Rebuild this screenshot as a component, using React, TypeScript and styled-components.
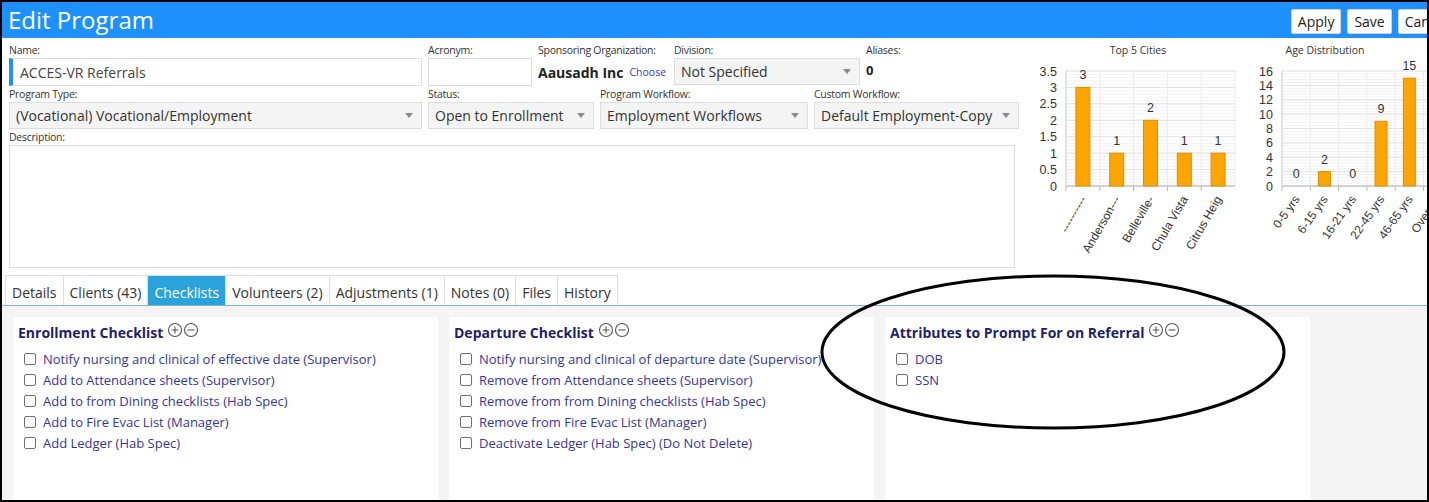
import React from 'react'
import styled, { createGlobalStyle } from 'styled-components'

const GlobalStyle = createGlobalStyle`
  html, body {
    margin: 0;
    padding: 0;
    background: #fff;
  }
  body {
    font-family: 'Open Sans', 'Noto Sans', sans-serif;
    color: #333;
  }
  * {
    box-sizing: border-box;
  }
`

interface Bar {
  label: string
  value: number
}

const cities: Bar[] = [
  { label: '----------', value: 3 },
  { label: 'Anderson---', value: 1 },
  { label: 'Belleville-', value: 2 },
  { label: 'Chula Vista', value: 1 },
  { label: 'Citrus Heig', value: 1 }
]

const ages: Bar[] = [
  { label: '0-5 yrs', value: 0 },
  { label: '6-15 yrs', value: 2 },
  { label: '16-21 yrs', value: 0 },
  { label: '22-45 yrs', value: 9 },
  { label: '46-65 yrs', value: 15 },
  { label: 'Over 65', value: 4 }
]

const enrollment = [
  'Notify nursing and clinical of effective date (Supervisor)',
  'Add to Attendance sheets (Supervisor)',
  'Add to from Dining checklists (Hab Spec)',
  'Add to Fire Evac List (Manager)',
  'Add Ledger (Hab Spec)'
]

const departure = [
  'Notify nursing and clinical of departure date (Supervisor)',
  'Remove from Attendance sheets (Supervisor)',
  'Remove from from Dining checklists (Hab Spec)',
  'Remove from Fire Evac List (Manager)',
  'Deactivate Ledger (Hab Spec) (Do Not Delete)'
]

const tabs = ['Details', 'Clients (43)', 'Checklists', 'Volunteers (2)', 'Adjustments (1)', 'Notes (0)', 'Files', 'History']

const Frame = styled.div`
  position: relative;
  width: 1429px;
  height: 502px;
  border: 2px solid #000;
  display: flex;
  flex-direction: column;
  overflow: hidden;
  background: #fff;
`

const Header = styled.header`
  flex: none;
  height: 36px;
  background: #1e90ff;
  display: flex;
  align-items: center;
  padding-left: 6px;
`

const Title = styled.h1`
  flex: 1;
  margin: 0;
  font-size: 24px;
  font-weight: 400;
  line-height: 36px;
  color: #fff;
`

const Actions = styled.div`
  flex: none;
  display: flex;
  gap: 6px;
  margin-right: -28px;
  padding-top: 2px;
`

const ActionButton = styled.button`
  height: 25px;
  padding: 0 6px;
  background: #fff;
  border: 1px solid #d4d4d4;
  border-radius: 2px;
  font-family: 'Open Sans', sans-serif;
  font-size: 14px;
  color: #222;
`

const Top = styled.section`
  flex: none;
  height: 237px;
  display: flex;
`

const Form = styled.div`
  flex: none;
  width: 1028px;
  padding: 5px 0 0 7px;
  display: flex;
  flex-direction: column;
  gap: 1px;
`

const FieldRow = styled.div`
  display: flex;
  gap: 6px;
`

const Field = styled.div<{ $w: number }>`
  flex: none;
  width: ${(p) => p.$w}px;
  display: flex;
  flex-direction: column;
`

const Label = styled.label`
  height: 15px;
  font-size: 10.5px;
  line-height: 15px;
  letter-spacing: -0.25px;
  color: #333;
  white-space: nowrap;
`

const TextBox = styled.div<{ $focus?: boolean }>`
  height: 28px;
  display: flex;
  align-items: center;
  background: #fff;
  border: 1px solid #ddd;
  border-left: ${(p) => (p.$focus ? '4px solid #1e90ff' : '1px solid #ddd')};
  padding-left: ${(p) => (p.$focus ? 7 : 6)}px;
  font-size: 14px;
  color: #444;
`

const Select = styled.div`
  height: 27px;
  display: flex;
  align-items: center;
  justify-content: space-between;
  padding: 0 8px 0 6px;
  background: #f4f4f4;
  border: 1px solid #ddd;
  font-size: 14px;
  color: #333;
  white-space: nowrap;
`

const Caret = styled.span`
  width: 0;
  height: 0;
  border-left: 4px solid transparent;
  border-right: 4px solid transparent;
  border-top: 5px solid #8a8a8a;
`

const Sponsor = styled.div`
  height: 28px;
  display: flex;
  align-items: center;
  gap: 6px;
  white-space: nowrap;
`

const OrgName = styled.span`
  font-size: 14px;
  font-weight: 700;
  color: #222;
`

const ChooseLink = styled.a`
  font-size: 10.5px;
  color: #3a3ac4;
  text-decoration: none;
`

const Count = styled.div`
  padding-top: 3px;
  font-size: 13px;
  font-weight: 700;
  color: #222;
`

const TextArea = styled.div`
  height: 123px;
  background: #fff;
  border: 1px solid #ddd;
`

const Charts = styled.div`
  flex: 1;
  display: flex;
  padding-top: 2px;
  overflow: hidden;
`

const ChartSvg = styled.svg`
  flex: none;
  overflow: hidden;
  font-family: 'Liberation Sans', Arial, sans-serif;
  .title {
    font-family: 'Open Sans', sans-serif;
    font-size: 10.5px;
    fill: #333;
  }
  .num {
    font-size: 12.5px;
    fill: #333;
  }
  .cat {
    font-size: 12px;
    fill: #333;
  }
`

const TabBar = styled.nav`
  flex: none;
  height: 31px;
  display: flex;
  padding-left: 3px;
  border-bottom: 1px solid #7ab7c7;
`

const Tab = styled.div<{ $active?: boolean }>`
  display: flex;
  align-items: center;
  padding: 4px 6px 0;
  margin-right: -1px;
  font-size: 14px;
  border: 1px solid #ddd;
  border-bottom: none;
  background: ${(p) => (p.$active ? '#2aa3dc' : '#fff')};
  color: ${(p) => (p.$active ? '#fff' : '#333')};
`

const Content = styled.main`
  flex: 1;
  display: flex;
  gap: 11px;
  padding: 11px 0 0 11px;
  background: #f4f4f4;
`

const Panel = styled.section`
  flex: none;
  width: 425px;
  background: #fff;
  padding: 4px 5px;
`

const PanelHead = styled.h2`
  margin: 0 0 3px;
  display: flex;
  align-items: flex-start;
  font-size: 14px;
  font-weight: 700;
  line-height: 24px;
  color: #1e1e6e;
`

const IconPair = styled.svg`
  margin: 1px 0 0 4px;
`

const List = styled.div`
  padding-left: 6px;
  display: flex;
  flex-direction: column;
`

const Item = styled.label`
  height: 21px;
  display: flex;
  align-items: center;
  gap: 7px;
  font-size: 13px;
  color: #35359c;
  white-space: nowrap;
`

const Box = styled.span`
  flex: none;
  width: 12px;
  height: 12px;
  border: 1px solid #707070;
  border-radius: 2px;
  background: #fff;
`

const Ellipse = styled.svg`
  position: absolute;
  left: 815px;
  top: 268px;
  pointer-events: none;
`

const TOP = 31
const BOTTOM = 146

interface ChartProps {
  title: string
  titleX: number
  data: Bar[]
  max: number
  step: number
  left: number
  catW: number
  barW: number
  angle: number
  width: number
}

function BarChart({ title, titleX, data, max, step, left, catW, barW, angle, width }: ChartProps) {
  const scale = (BOTTOM - TOP) / max
  const right = left + catW * data.length
  const ticks: number[] = []
  for (let v = 0; v <= max + 0.001; v += step) ticks.push(v)
  const minor: number[] = []
  for (let v = 0; v <= max + 0.001; v += step / 5) minor.push(v)
  const y = (v: number) => BOTTOM - v * scale

  return (
    <ChartSvg width={width} height={230}>
      <text className='title' x={titleX} y={14} textAnchor='middle'>
        {title}
      </text>
      {minor.map((v) => (
        <line key={'m' + v} x1={left} x2={right} y1={y(v)} y2={y(v)} stroke='#f2f2f2' />
      ))}
      {ticks.map((v) => (
        <line key={'g' + v} x1={left} x2={right} y1={y(v)} y2={y(v)} stroke='#e2e2e2' />
      ))}
      {data.map((_, i) => (
        <line key={'v' + i} x1={left + catW * (i + 1)} x2={left + catW * (i + 1)} y1={TOP} y2={BOTTOM} stroke='#ebebeb' />
      ))}
      <line x1={left} x2={left} y1={TOP} y2={BOTTOM} stroke='#c8c8c8' />
      <line x1={left} x2={right} y1={BOTTOM} y2={BOTTOM} stroke='#b8b8b8' />
      {data.map((_, i) => (
        <line key={'t' + i} x1={left + catW * i} x2={left + catW * i} y1={BOTTOM} y2={BOTTOM + 5} stroke='#b8b8b8' />
      ))}
      {ticks.map((v) => (
        <text key={'y' + v} className='num' x={left - 9} y={y(v) + 4.5} textAnchor='end'>
          {v}
        </text>
      ))}
      {data.map((d, i) => {
        const cx = left + catW * (i + 0.5)
        return (
          <g key={d.label}>
            {d.value > 0 && (
              <rect x={cx - barW / 2} y={y(d.value)} width={barW} height={d.value * scale} fill='#ffa500' stroke='#dc8e00' />
            )}
            <text className='num' x={cx} y={y(d.value) - 8} textAnchor='middle'>
              {d.value}
            </text>
            <text className='cat' textAnchor='end' transform={`translate(${cx + 4} ${BOTTOM + 13}) rotate(${angle})`}>
              {d.label}
            </text>
          </g>
        )
      })}
    </ChartSvg>
  )
}

const PlusMinus = () => (
  <IconPair width='34' height='16' viewBox='0 0 34 16'>
    <circle cx='8' cy='8' r='6.5' fill='none' stroke='#555' strokeWidth='1.1' />
    <path d='M8 4.6v6.8M4.6 8h6.8' stroke='#555' strokeWidth='1.1' />
    <circle cx='24' cy='8' r='6.5' fill='none' stroke='#555' strokeWidth='1.1' />
    <path d='M20.6 8h6.8' stroke='#555' strokeWidth='1.1' />
  </IconPair>
)

function Checklist({ title, items }: { title: string; items: string[] }) {
  return (
    <Panel>
      <PanelHead>
        {title}
        <PlusMinus />
      </PanelHead>
      <List>
        {items.map((item) => (
          <Item key={item}>
            <Box />
            {item}
          </Item>
        ))}
      </List>
    </Panel>
  )
}

export default function App() {
  return (
    <>
      <GlobalStyle />
      <Frame>
        <Header>
          <Title>Edit Program</Title>
          <Actions>
            <ActionButton>Apply</ActionButton>
            <ActionButton>Save</ActionButton>
            <ActionButton>Cancel</ActionButton>
          </Actions>
        </Header>

        <Top>
          <Form>
            <FieldRow>
              <Field $w={413}>
                <Label>Name:</Label>
                <TextBox $focus>ACCES-VR Referrals</TextBox>
              </Field>
              <Field $w={104}>
                <Label>Acronym:</Label>
                <TextBox />
              </Field>
              <Field $w={130}>
                <Label>Sponsoring Organization:</Label>
                <Sponsor>
                  <OrgName>Aausadh Inc</OrgName>
                  <ChooseLink>Choose</ChooseLink>
                </Sponsor>
              </Field>
              <Field $w={186}>
                <Label>Division:</Label>
                <Select>
                  Not Specified
                  <Caret />
                </Select>
              </Field>
              <Field $w={60}>
                <Label>Aliases:</Label>
                <Count>0</Count>
              </Field>
            </FieldRow>
            <FieldRow>
              <Field $w={413}>
                <Label>Program Type:</Label>
                <Select>
                  (Vocational) Vocational/Employment
                  <Caret />
                </Select>
              </Field>
              <Field $w={166}>
                <Label>Status:</Label>
                <Select>
                  Open to Enrollment
                  <Caret />
                </Select>
              </Field>
              <Field $w={208}>
                <Label>Program Workflow:</Label>
                <Select>
                  Employment Workflows
                  <Caret />
                </Select>
              </Field>
              <Field $w={205}>
                <Label>Custom Workflow:</Label>
                <Select>
                  Default Employment-Copy
                  <Caret />
                </Select>
              </Field>
            </FieldRow>
            <FieldRow>
              <Field $w={1006}>
                <Label>Description:</Label>
                <TextArea />
              </Field>
            </FieldRow>
          </Form>

          <Charts>
            <BarChart
              title='Top 5 Cities'
              titleX={108}
              data={cities}
              max={3.5}
              step={0.5}
              left={36}
              catW={33.8}
              barW={14}
              angle={-60}
              width={210}
            />
            <BarChart
              title='Age Distribution'
              titleX={85}
              data={ages}
              max={16}
              step={2}
              left={42}
              catW={28.3}
              barW={12}
              angle={-55}
              width={187}
            />
          </Charts>
        </Top>

        <TabBar>
          {tabs.map((t) => (
            <Tab key={t} $active={t === 'Checklists'}>
              {t}
            </Tab>
          ))}
        </TabBar>

        <Content>
          <Checklist title='Enrollment Checklist' items={enrollment} />
          <Checklist title='Departure Checklist' items={departure} />
          <Checklist title='Attributes to Prompt For on Referral' items={['DOB', 'SSN']} />
        </Content>

        <Ellipse width='472' height='164' viewBox='0 0 472 164'>
          <ellipse cx='236' cy='82' rx='231' ry='76' fill='none' stroke='#000' strokeWidth='3' />
        </Ellipse>
      </Frame>
    </>
  )
}
